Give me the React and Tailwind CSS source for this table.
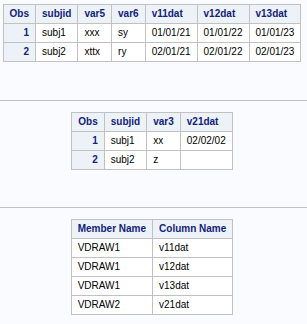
const th = "border border-[#c1c1c1] bg-[#edf2f9] text-[#112277] font-bold px-[6px] py-[3px] leading-[12px] text-left whitespace-nowrap";
const obs = "border border-[#c1c1c1] bg-[#edf2f9] text-[#112277] font-bold px-[6px] py-[3px] leading-[12px] text-right whitespace-nowrap";
const td = "border border-[#c1c1c1] bg-white text-black px-[6px] py-[3px] leading-[12px] text-left whitespace-nowrap";

function Table({ head, rows, numbered }) {
  return (
    <table className="mx-auto border-collapse border border-[#c1c1c1] text-[10px]">
      <thead>
        <tr>
          {head.map((h, i) => (
            <th key={h} className={numbered && i === 0 ? obs : th}>
              {h}
            </th>
          ))}
        </tr>
      </thead>
      <tbody>
        {rows.map((r, ri) => (
          <tr key={ri}>
            {numbered && <th className={obs}>{ri + 1}</th>}
            {r.map((c, ci) => (
              <td key={ci} className={td}>
                {c}
                {c === "" && "\u00a0"}
              </td>
            ))}
          </tr>
        ))}
      </tbody>
    </table>
  );
}

export default function App() {
  return (
    <div className="min-h-screen bg-[#fafbfe]" style={{ fontFamily: '"Liberation Sans", Arial, sans-serif' }}>
      <div className="w-[304px] pt-[4px] pb-[6px]">
        <Table
          numbered
          head={["Obs", "subjid", "var5", "var6", "v11dat", "v12dat", "v13dat"]}
          rows={[
            ["subj1", "xxx", "sy", "01/01/21", "01/01/22", "01/01/23"],
            ["subj2", "xttx", "ry", "02/01/21", "02/01/22", "02/01/23"],
          ]}
        />
        <div className="mt-[38px] mb-[11px] border-t border-[#c1c1c1] w-[307px]" />
        <Table
          numbered
          head={["Obs", "subjid", "var3", "v21dat"]}
          rows={[
            ["subj1", "xx", "02/02/02"],
            ["subj2", "z", ""],
          ]}
        />
        <div className="mt-[37px] mb-[11px] border-t border-[#c1c1c1] w-[307px]" />
        <Table
          head={["Member Name", "Column Name"]}
          rows={[
            ["VDRAW1", "v11dat"],
            ["VDRAW1", "v12dat"],
            ["VDRAW1", "v13dat"],
            ["VDRAW2", "v21dat"],
          ]}
        />
      </div>
    </div>
  );
}
